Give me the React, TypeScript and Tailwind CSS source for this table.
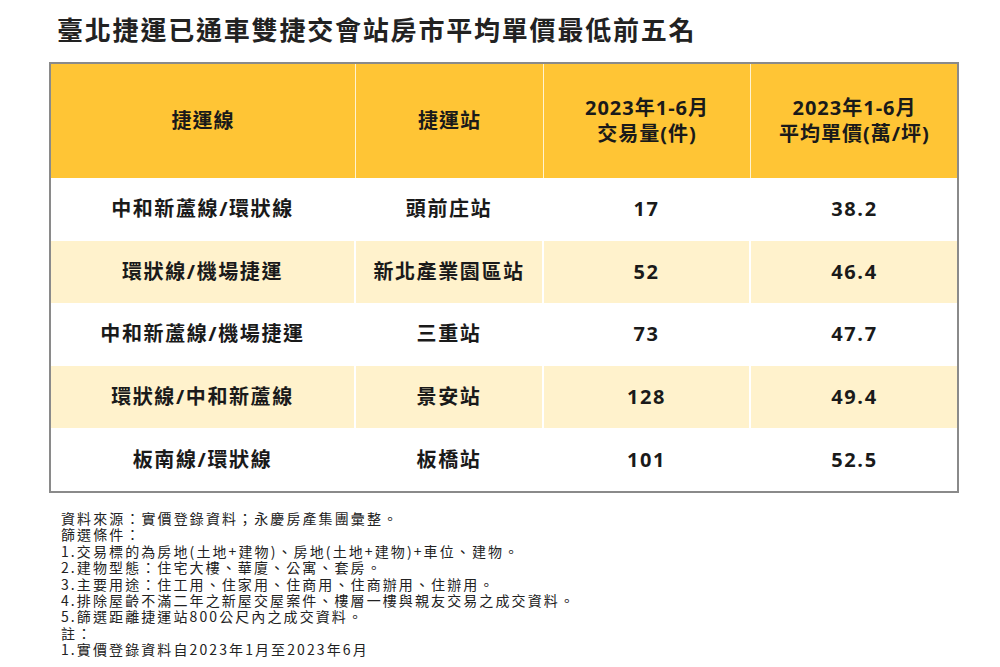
import React from 'react';

const font = { fontFamily: '"Open Sans", "Noto Sans CJK TC", sans-serif' };

const rows = [
  { line: '中和新蘆線/環狀線', station: '頭前庄站', count: '17', price: '38.2' },
  { line: '環狀線/機場捷運', station: '新北產業園區站', count: '52', price: '46.4' },
  { line: '中和新蘆線/機場捷運', station: '三重站', count: '73', price: '47.7' },
  { line: '環狀線/中和新蘆線', station: '景安站', count: '128', price: '49.4' },
  { line: '板南線/環狀線', station: '板橋站', count: '101', price: '52.5' },
];

const notes = [
  '資料來源：實價登錄資料；永慶房產集團彙整。',
  '篩選條件：',
  '1.交易標的為房地(土地+建物)、房地(土地+建物)+車位、建物。',
  '2.建物型態：住宅大樓、華廈、公寓、套房。',
  '3.主要用途：住工用、住家用、住商用、住商辦用、住辦用。',
  '4.排除屋齡不滿二年之新屋交屋案件、樓層一樓與親友交易之成交資料。',
  '5.篩選距離捷運站800公尺內之成交資料。',
  '註：',
  '1.實價登錄資料自2023年1月至2023年6月',
];

const cols = 'grid grid-cols-[305px_188px_207px_207px]';

export default function App() {
  return (
    <div className="w-[1000px] h-[667px] bg-white overflow-hidden text-[#1a1a1a]" style={font}>
      {/* Title */}
      <h1 className="pt-[14px] pl-[57px] text-[26px] leading-[32px] font-bold tracking-[1.8px] text-[#222]">
        臺北捷運已通車雙捷交會站房市平均單價最低前五名
      </h1>

      {/* Table */}
      <div className="mt-[16px] ml-[49px] w-[910px] border-2 border-[#8a8a8a]">
        <div className={`${cols} h-[114px] bg-[#ffc535] text-[20px] font-bold tracking-[1px] leading-[26px]`}>
          <div className="flex items-center justify-center border-r border-[#fff3d0]">捷運線</div>
          <div className="flex items-center justify-center border-r border-[#fff3d0]">捷運站</div>
          <div className="flex flex-col items-center justify-center border-r border-[#fff3d0]">
            <span>2023年1-6月</span>
            <span>交易量(件)</span>
          </div>
          <div className="flex flex-col items-center justify-center">
            <span>2023年1-6月</span>
            <span>平均單價(萬/坪)</span>
          </div>
        </div>
        {rows.map((r, i) => (
          <div
            key={r.station}
            className={`${cols} h-[62.6px] text-[20px] font-bold tracking-[1.6px] ${i % 2 === 1 ? 'bg-[#fff2cc]' : 'bg-white'}`}
          >
            <div className="flex items-center justify-center border-r-2 border-white">{r.line}</div>
            <div className="flex items-center justify-center border-r-2 border-white">{r.station}</div>
            <div className="flex items-center justify-center border-r-2 border-white">{r.count}</div>
            <div className="flex items-center justify-center">{r.price}</div>
          </div>
        ))}
      </div>

      {/* Notes */}
      <div
        className="mt-[17px] ml-[61px] text-[14px] leading-[16.4px] tracking-[2.1px] text-[#222]"
        style={{ fontFamily: '"Noto Sans CJK TC", "Open Sans", sans-serif' }}
      >
        {notes.map((n) => (
          <div key={n}>{n}</div>
        ))}
      </div>
    </div>
  );
}
